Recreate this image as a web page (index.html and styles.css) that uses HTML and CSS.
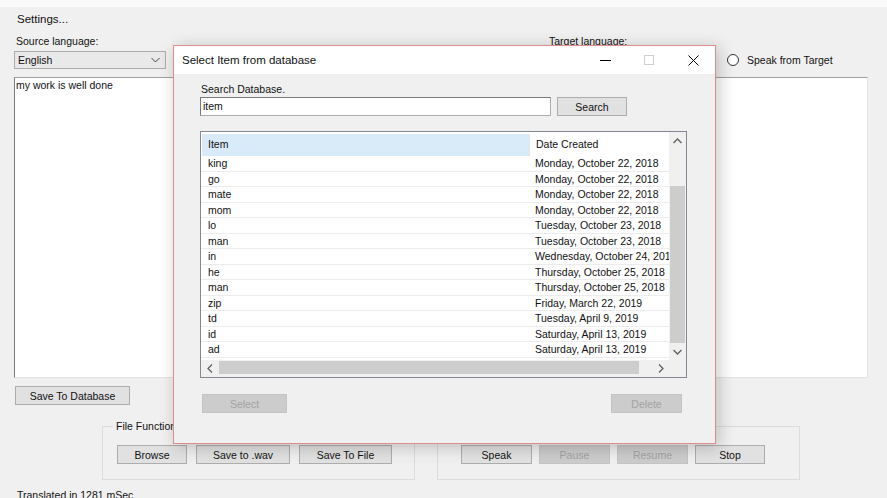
FILE: index.html
```html
<!DOCTYPE html>
<html lang="en">
<head>
    <meta charset="UTF-8">
    <meta name="viewport" content="width=device-width, initial-scale=1.0">
    <title>Translator</title>
    <link rel="stylesheet" href="styles.css">
</head>
<body>
    <div id="top_strip"></div>
    <div id="main_form">
        <div class="menuItem">Settings...</div>

        <div class="langRow">
            <div class="langCol">
                <span class="fieldLabel">Source language:</span>
                <div class="controlLine">
                    <div class="combo">
                        <span>English</span>
                        <svg class="comboArrow" width="9" height="6" viewBox="0 0 9 6"><polyline points="0.5,1 4.5,5 8.5,1" fill="none" stroke="#444" stroke-width="1"/></svg>
                    </div>
                </div>
                <div class="textBox">my work is well done</div>
            </div>
            <div class="langCol">
                <span class="fieldLabel targetLabel">Target language:</span>
                <div class="controlLine">
                    <div class="combo targetCombo">
                        <span>French</span>
                        <svg class="comboArrow" width="9" height="6" viewBox="0 0 9 6"><polyline points="0.5,1 4.5,5 8.5,1" fill="none" stroke="#444" stroke-width="1"/></svg>
                    </div>
                    <label class="radioLabel"><span class="radioDot"></span>Speak from Target</label>
                </div>
                <div class="textBox"></div>
            </div>
        </div>

        <button class="winButton saveDbButton">Save To Database</button>

        <div class="groupRow">
            <div class="groupBox fileGroup">
                <span class="groupTitle">File Functions</span>
                <button class="winButton" style="width: 70px;">Browse</button>
                <button class="winButton" style="width: 94px;">Save to .wav</button>
                <button class="winButton" style="width: 93px;">Save To File</button>
            </div>
            <div class="groupBox speechGroup">
                <button class="winButton">Speak</button>
                <button class="winButton" disabled>Pause</button>
                <button class="winButton" disabled>Resume</button>
                <button class="winButton" style="width: 70px;">Stop</button>
            </div>
        </div>

        <div class="statusText">Translated in 1281 mSec</div>
    </div>

    <div id="db_dialog">
        <div class="titleBar">
            <span class="titleText">Select Item from database</span>
            <div class="titleButtons">
                <span class="titleBtn"><svg width="11" height="11" viewBox="0 0 11 11"><line x1="0" y1="5.5" x2="11" y2="5.5" stroke="#000" stroke-width="1"/></svg></span>
                <span class="titleBtn"><svg width="10" height="10" viewBox="0 0 10 10"><rect x="0.5" y="0.5" width="9" height="9" fill="none" stroke="#cfcfcf" stroke-width="1"/></svg></span>
                <span class="titleBtn"><svg width="11" height="11" viewBox="0 0 11 11"><line x1="0.5" y1="0.5" x2="10.5" y2="10.5" stroke="#000" stroke-width="1"/><line x1="10.5" y1="0.5" x2="0.5" y2="10.5" stroke="#000" stroke-width="1"/></svg></span>
            </div>
        </div>

        <div class="dialogBody">
            <div class="searchLabel">Search Database.</div>
            <div class="searchRow">
                <div class="searchInput">item</div>
                <button class="winButton searchButton">Search</button>
            </div>

            <div class="listView">
                <div class="listContent">
                    <div class="listHeader">
                        <div class="headItem">Item</div>
                        <div class="headDate">Date Created</div>
                    </div>
                    <div id="list_rows"></div>
                </div>
                <div class="vScroll">
                    <div class="scrollArrow"><svg width="9" height="6" viewBox="0 0 9 6"><polyline points="0.5,5 4.5,1 8.5,5" fill="none" stroke="#606060" stroke-width="1.3"/></svg></div>
                    <div class="vTrack"><div class="vThumb"></div></div>
                    <div class="scrollArrow"><svg width="9" height="6" viewBox="0 0 9 6"><polyline points="0.5,1 4.5,5 8.5,1" fill="none" stroke="#606060" stroke-width="1.3"/></svg></div>
                </div>
                <div class="hScroll">
                    <div class="scrollArrow"><svg width="6" height="9" viewBox="0 0 6 9"><polyline points="5,0.5 1,4.5 5,8.5" fill="none" stroke="#606060" stroke-width="1.3"/></svg></div>
                    <div class="hTrack"><div class="hThumb"></div></div>
                    <div class="scrollArrow"><svg width="6" height="9" viewBox="0 0 6 9"><polyline points="1,0.5 5,4.5 1,8.5" fill="none" stroke="#606060" stroke-width="1.3"/></svg></div>
                </div>
                <div class="scrollCorner"></div>
            </div>

            <div class="dialogButtons">
                <button class="winButton selectButton" disabled>Select</button>
                <button class="winButton deleteButton" disabled>Delete</button>
            </div>
        </div>
    </div>

    <script>
        let items = [
            ["king", "Monday, October 22, 2018"],
            ["go", "Monday, October 22, 2018"],
            ["mate", "Monday, October 22, 2018"],
            ["mom", "Monday, October 22, 2018"],
            ["lo", "Tuesday, October 23, 2018"],
            ["man", "Tuesday, October 23, 2018"],
            ["in", "Wednesday, October 24, 2018"],
            ["he", "Thursday, October 25, 2018"],
            ["man", "Thursday, October 25, 2018"],
            ["zip", "Friday, March 22, 2019"],
            ["td", "Tuesday, April 9, 2019"],
            ["id", "Saturday, April 13, 2019"],
            ["ad", "Saturday, April 13, 2019"]
        ];

        let rows = document.getElementById("list_rows");
        let html = "";
        for (let i = 0; i < items.length; i++) {
            html += `
                <div class="listRow">
                    <div class="cellItem">${items[i][0]}</div>
                    <div class="cellDate">${items[i][1]}</div>
                </div>`;
        }
        rows.innerHTML = html;
    </script>
</body>
</html>
```

FILE: styles.css
```css
body {
    margin: 0;

    width: 887px;
    height: 498px;

    overflow: hidden;
    position: relative;

    background-color: #f0f0f0;

    font-family: "Liberation Sans", Arial, sans-serif;
    font-size: 10.5px;
    color: #111;
}
#top_strip {
    height: 7px;

    background-color: #fafafa;
}
#main_form {
    padding: 0 19px 0 14px;
}
.menuItem {
    margin-top: 6px;
    padding-left: 3px;

    font-size: 11.5px;
    line-height: 12px;
}
.langRow {
    display: grid;
    grid-template-columns: 424px 425px;
    gap: 5px;

    margin-top: 10px;
}
.fieldLabel {
    display: block;

    padding-left: 2px;

    line-height: 12px;
}
.targetLabel {
    padding-left: 106px;
}
.controlLine {
    display: flex;
    align-items: center;

    margin-top: 4px;

    height: 18px;
}
.combo {
    display: flex;
    align-items: center;
    justify-content: space-between;

    box-sizing: border-box;
    width: 152px;
    height: 18px;

    padding: 0 5px 0 3px;

    border: 1px solid #adadad;
    background-color: #e9e9e9;
}
.targetCombo {
    margin-left: 104px;
}
.radioLabel {
    display: flex;
    align-items: center;

    margin-left: 28px;
}
.radioDot {
    box-sizing: border-box;
    width: 12px;
    height: 12px;

    margin-right: 8px;

    border: 1px solid #333;
    border-radius: 50%;
    background-color: #fff;
}
.textBox {
    box-sizing: border-box;
    height: 301px;

    margin-top: 8px;
    padding: 1px 1px;

    border: 1px solid #e3e3e3;
    border-top-color: #a0a0a0;
    border-left-color: #7a7a7a;
    background-color: #fff;

    line-height: 12px;
}
.winButton {
    box-sizing: border-box;
    height: 19px;

    padding: 0;

    border: 1px solid #adadad;
    background-color: #e1e1e1;

    font-family: inherit;
    font-size: 10.5px;
    color: #111;
}
.winButton:disabled {
    border-color: #c4c4c4;
    background-color: #cccccc;

    color: #a3a3a3;
}
.saveDbButton {
    display: block;

    width: 115px;

    margin-top: 8px;
    margin-left: 1px;
}
.groupRow {
    display: flex;

    margin-top: 21px;
}
.groupBox {
    position: relative;

    display: flex;
    gap: 9px;

    box-sizing: border-box;
    height: 54px;

    padding-top: 18px;

    border: 1px solid #dcdcdc;
}
.fileGroup {
    width: 313px;

    margin-left: 88px;
    padding-left: 14px;
}
.speechGroup {
    gap: 7px;

    width: 363px;

    margin-left: 22px;
    padding-left: 23px;
}
.speechGroup .winButton {
    width: 71px;
}
.groupTitle {
    position: absolute;
    top: -7px;
    left: 10px;

    padding: 0 3px;

    background-color: #f0f0f0;

    line-height: 12px;
}
.statusText {
    margin-top: 9px;
    padding-left: 3px;

    line-height: 12px;
}

/* dialog window */
#db_dialog {
    position: absolute;
    left: 173px;
    top: 45px;

    box-sizing: border-box;
    width: 543px;
    height: 399px;

    border: 1px solid #e08c8c;
    background-color: #f0f0f0;

    box-shadow: 3px 3px 16px rgba(0, 0, 0, 0.22);
}
.titleBar {
    display: flex;
    align-items: center;

    height: 28px;

    padding-left: 8px;

    background-color: #fff;

    font-size: 11.5px;
}
.titleButtons {
    display: flex;

    margin-left: auto;
}
.titleBtn {
    display: flex;
    align-items: center;
    justify-content: center;

    width: 44px;
    height: 28px;
}
.dialogBody {
    padding: 9px 0 0 26px;
}
.searchLabel {
    padding-left: 1px;

    line-height: 12px;
}
.searchRow {
    display: flex;

    margin-top: 2px;
}
.searchInput {
    box-sizing: border-box;
    width: 351px;
    height: 19px;

    padding-left: 2px;

    border: 1px solid #abadb3;
    border-left-color: #7a7a7a;
    border-top-color: #7a7a7a;
    background-color: #fff;

    line-height: 17px;
}
.searchButton {
    width: 70px;

    margin-left: 6px;
}
.listView {
    display: grid;
    grid-template-columns: 468px 17px;
    grid-template-rows: 228px 17px;

    width: 487px;
    height: 247px;
    box-sizing: border-box;

    margin-top: 15px;

    border: 1px solid #828790;
    background-color: #fff;
}
.listContent {
    overflow: hidden;
}
.listHeader {
    display: flex;

    height: 24px;
}
.headItem {
    box-sizing: border-box;
    width: 327px;
    height: 22px;

    margin-top: 2px;
    margin-left: 1px;
    padding-left: 6px;

    background-color: #d9ebf9;

    line-height: 20px;
}
.headDate {
    box-sizing: border-box;
    width: 140px;

    margin-top: 2px;
    padding-left: 6px;

    border-left: 1px solid #e5e5e5;

    line-height: 20px;
}
.listRow {
    display: flex;

    box-sizing: border-box;
    height: 15.5px;

    border-bottom: 1px solid #ececec;

    line-height: 14px;
}
.cellItem {
    box-sizing: border-box;
    width: 328px;

    padding-left: 7px;
}
.cellDate {
    box-sizing: border-box;
    width: 140px;

    padding-left: 6px;

    white-space: nowrap;
    overflow: hidden;
}
.vScroll {
    display: flex;
    flex-direction: column;

    background-color: #f0f0f0;
}
.hScroll {
    display: flex;

    background-color: #f0f0f0;
}
.scrollArrow {
    display: flex;
    align-items: center;
    justify-content: center;

    width: 17px;
    height: 17px;
    flex: none;
}
.vTrack {
    flex: 1;

    padding-top: 37px;
}
.vThumb {
    width: 15px;
    height: 157px;

    margin-left: 1px;

    background-color: #cdcdcd;
}
.hTrack {
    flex: 1;

    padding-left: 1px;
}
.hThumb {
    width: 420px;
    height: 13px;

    margin-top: 1px;

    background-color: #cdcdcd;
}
.scrollCorner {
    background-color: #f0f0f0;
}
.dialogButtons {
    display: flex;
    justify-content: space-between;

    width: 487px;

    margin-top: 16px;
}
.selectButton {
    width: 85px;

    margin-left: 2px;
}
.deleteButton {
    width: 71px;

    margin-right: 5px;
}
```
